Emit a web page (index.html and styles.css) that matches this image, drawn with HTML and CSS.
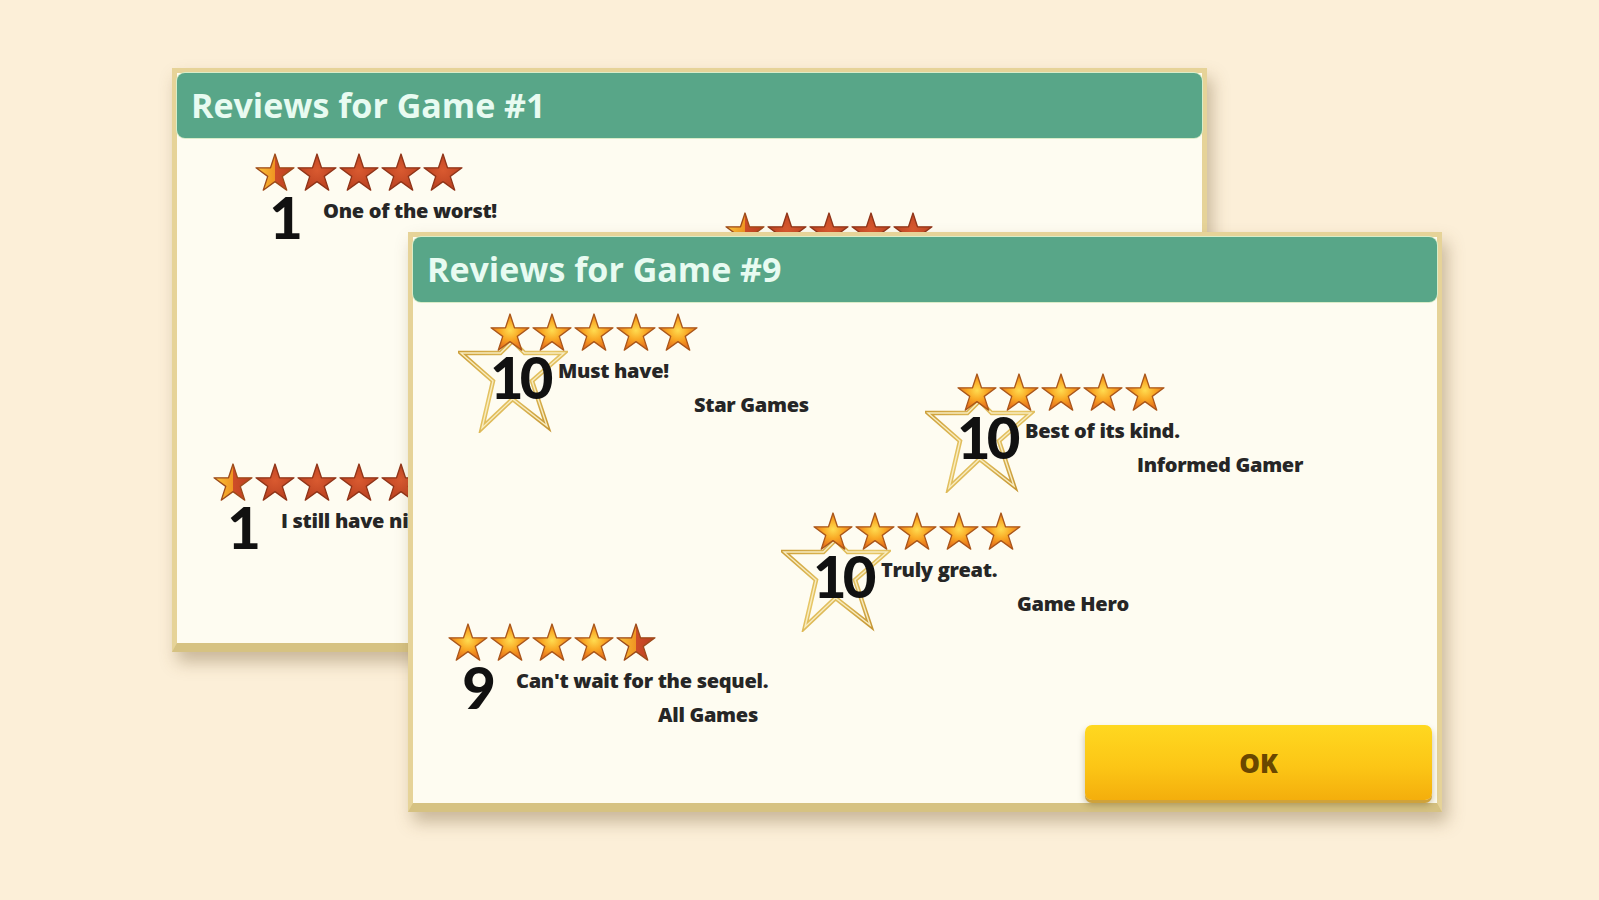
FILE: index.html
```html
<!DOCTYPE html>
<html lang="en">
<head>
    <meta charset="UTF-8">
    <title>Reviews</title>

    <link rel="stylesheet" href="styles.css">
</head>
<body>

    <!-- shared star shapes and fills -->
    <svg class="defs" width="0" height="0" aria-hidden="true">
        <defs>
            <radialGradient id="g-full" cx="50%" cy="45%" r="58%">
                <stop offset="0" stop-color="#ffdc50"/>
                <stop offset="0.45" stop-color="#f9a824"/>
                <stop offset="1" stop-color="#e2621a"/>
            </radialGradient>
            <radialGradient id="g-empty" cx="50%" cy="45%" r="60%">
                <stop offset="0" stop-color="#d95a30"/>
                <stop offset="1" stop-color="#b83f1f"/>
            </radialGradient>
            <linearGradient id="g-half" x1="0" y1="0" x2="1" y2="0">
                <stop offset="0" stop-color="#fcc43a"/>
                <stop offset="0.5" stop-color="#ef9522"/>
                <stop offset="0.5" stop-color="#cf4d28"/>
                <stop offset="1" stop-color="#b83f1f"/>
            </linearGradient>
            <linearGradient id="g-rim" x1="0" y1="0" x2="1" y2="1">
                <stop offset="0" stop-color="#c99a34"/>
                <stop offset="0.5" stop-color="#e7c766"/>
                <stop offset="1" stop-color="#c18f2c"/>
            </linearGradient>
        </defs>
        <symbol id="star-full" viewBox="0 0 40 38">
            <polygon points="20,1 24.49,14.82 39.02,14.82 27.27,23.36 31.76,37.18 20,28.64 8.24,37.18 12.73,23.36 0.98,14.82 15.51,14.82"
                     fill="url(#g-full)" stroke="#a9561a" stroke-width="1.3" stroke-linejoin="round"/>
        </symbol>
        <symbol id="star-empty" viewBox="0 0 40 38">
            <polygon points="20,1 24.49,14.82 39.02,14.82 27.27,23.36 31.76,37.18 20,28.64 8.24,37.18 12.73,23.36 0.98,14.82 15.51,14.82"
                     fill="url(#g-empty)" stroke="#8f3418" stroke-width="1.3" stroke-linejoin="round"/>
        </symbol>
        <symbol id="star-half" viewBox="0 0 40 38">
            <polygon points="20,1 24.49,14.82 39.02,14.82 27.27,23.36 31.76,37.18 20,28.64 8.24,37.18 12.73,23.36 0.98,14.82 15.51,14.82"
                     fill="url(#g-half)" stroke="#9c4a1a" stroke-width="1.3" stroke-linejoin="round"/>
        </symbol>
        <symbol id="badge" viewBox="-32 0 110 120">
            <polygon points="22.5,28 34.6,40 74,40 42,68 57,113 22.5,86 -8,115 3,68 -29,40 10.4,40"
                     fill="none" stroke="url(#g-rim)" stroke-width="4.5" stroke-linejoin="miter"/>
            <polygon points="22.5,28 34.6,40 74,40 42,68 57,113 22.5,86 -8,115 3,68 -29,40 10.4,40"
                     fill="none" stroke="#f8ecc0" stroke-width="1.4" stroke-linejoin="miter"/>
        </symbol>
    </svg>

    <div class="desk">

        <section class="dialog back">
            <header class="dialog-head">Reviews for Game #1</header>
            <div class="canvas">

                <div class="review pos-a">
                    <div class="stars">
                        <svg class="star"><use href="#star-half"/></svg>
                        <svg class="star"><use href="#star-empty"/></svg>
                        <svg class="star"><use href="#star-empty"/></svg>
                        <svg class="star"><use href="#star-empty"/></svg>
                        <svg class="star"><use href="#star-empty"/></svg>
                    </div>
                    <div class="body">
                        <div class="score"><span>1</span></div>
                        <div class="text">
                            <p class="quote">One of the worst!</p>
                        </div>
                    </div>
                </div>

                <!-- only the top of this one shows above the front window -->
                <div class="review pos-b">
                    <div class="stars">
                        <svg class="star"><use href="#star-half"/></svg>
                        <svg class="star"><use href="#star-empty"/></svg>
                        <svg class="star"><use href="#star-empty"/></svg>
                        <svg class="star"><use href="#star-empty"/></svg>
                        <svg class="star"><use href="#star-empty"/></svg>
                    </div>
                </div>

                <div class="review pos-c">
                    <div class="stars">
                        <svg class="star"><use href="#star-half"/></svg>
                        <svg class="star"><use href="#star-empty"/></svg>
                        <svg class="star"><use href="#star-empty"/></svg>
                        <svg class="star"><use href="#star-empty"/></svg>
                        <svg class="star"><use href="#star-empty"/></svg>
                    </div>
                    <div class="body">
                        <div class="score"><span>1</span></div>
                        <div class="text">
                            <p class="quote">I still have nightmares.</p>
                        </div>
                    </div>
                </div>

            </div>
        </section>

        <section class="dialog front">
            <header class="dialog-head">Reviews for Game #9</header>
            <div class="canvas">

                <div class="review pos-1">
                    <div class="stars">
                        <svg class="star"><use href="#star-full"/></svg>
                        <svg class="star"><use href="#star-full"/></svg>
                        <svg class="star"><use href="#star-full"/></svg>
                        <svg class="star"><use href="#star-full"/></svg>
                        <svg class="star"><use href="#star-full"/></svg>
                    </div>
                    <div class="body">
                        <div class="score">
                            <svg class="badge"><use href="#badge"/></svg>
                            <span>10</span>
                        </div>
                        <div class="text">
                            <p class="quote">Must have!</p>
                            <p class="author">Star Games</p>
                        </div>
                    </div>
                </div>

                <div class="review pos-2">
                    <div class="stars">
                        <svg class="star"><use href="#star-full"/></svg>
                        <svg class="star"><use href="#star-full"/></svg>
                        <svg class="star"><use href="#star-full"/></svg>
                        <svg class="star"><use href="#star-full"/></svg>
                        <svg class="star"><use href="#star-full"/></svg>
                    </div>
                    <div class="body">
                        <div class="score">
                            <svg class="badge"><use href="#badge"/></svg>
                            <span>10</span>
                        </div>
                        <div class="text">
                            <p class="quote">Best of its kind.</p>
                            <p class="author">Informed Gamer</p>
                        </div>
                    </div>
                </div>

                <div class="review pos-3">
                    <div class="stars">
                        <svg class="star"><use href="#star-full"/></svg>
                        <svg class="star"><use href="#star-full"/></svg>
                        <svg class="star"><use href="#star-full"/></svg>
                        <svg class="star"><use href="#star-full"/></svg>
                        <svg class="star"><use href="#star-full"/></svg>
                    </div>
                    <div class="body">
                        <div class="score">
                            <svg class="badge"><use href="#badge"/></svg>
                            <span>10</span>
                        </div>
                        <div class="text">
                            <p class="quote">Truly great.</p>
                            <p class="author">Game Hero</p>
                        </div>
                    </div>
                </div>

                <div class="review pos-4">
                    <div class="stars">
                        <svg class="star"><use href="#star-full"/></svg>
                        <svg class="star"><use href="#star-full"/></svg>
                        <svg class="star"><use href="#star-full"/></svg>
                        <svg class="star"><use href="#star-full"/></svg>
                        <svg class="star"><use href="#star-half"/></svg>
                    </div>
                    <div class="body">
                        <div class="score"><span>9</span></div>
                        <div class="text">
                            <p class="quote">Can't wait for the sequel.</p>
                            <p class="author">All Games</p>
                        </div>
                    </div>
                </div>

            </div>
            <div class="footer">
                <button class="ok">OK</button>
            </div>
        </section>

    </div>

</body>
</html>
```

FILE: styles.css
```css
* {
    margin: 0;
    padding: 0;
    box-sizing: border-box;
}

body {
    width: 1599px;
    height: 900px;
    overflow: hidden;
    background: #fcefd8;
    font-family: "Open Sans", "Liberation Sans", sans-serif;
}

.defs {
    position: absolute;
    width: 0;
    height: 0;
    overflow: hidden;
}

.desk {
    position: relative;
    width: 1599px;
    height: 900px;
}

/* windows */
.dialog {
    position: absolute;
    width: 1035px;
    height: 584px;
    display: flex;
    flex-direction: column;
    background: #fefcf1;
    border: 5px solid #e6d398;
    border-bottom-width: 9px;
    border-bottom-color: #d6c282;
    box-shadow: 5px 10px 16px rgba(105, 80, 40, 0.35);
}

.back {
    left: 172px;
    top: 68px;
    z-index: 1;
}

.front {
    left: 408px;
    top: 232px;
    width: 1034px;
    height: 580px;
    z-index: 2;
}

.dialog-head {
    flex: none;
    height: 65px;
    line-height: 65px;
    padding-left: 14px;
    background: #58a688;
    border-radius: 8px;
    box-shadow: 0 0 0 1px #d9ecc8;
    color: #e8fbf1;
    font-size: 34px;
    font-weight: 700;
}

.canvas {
    flex: 1;
    position: relative;
}

.footer {
    display: flex;
    justify-content: flex-end;
    padding: 0 5px 3px;
}

.ok {
    width: 347px;
    height: 75px;
    border: none;
    border-radius: 7px;
    background: linear-gradient(#ffd820, #fcc616 55%, #f4ae0c);
    box-shadow: 0 3px 0 #cfa23a, 0 5px 7px rgba(90, 70, 20, 0.35);
    font-family: inherit;
    font-size: 26px;
    font-weight: 800;
    color: #6a4700;
}

/* reviews */
.review {
    position: absolute;
}

.pos-a { left: 78px; top: 15px; }
.pos-b { left: 548px; top: 74px; }
.pos-c { left: 36px; top: 325px; }

.pos-1 { left: 77px; top: 11px; }
.pos-2 { left: 544px; top: 71px; }
.pos-3 { left: 400px; top: 210px; }
.pos-4 { left: 35px; top: 321px; }

.stars {
    position: relative;
    z-index: 2;
    display: flex;
    gap: 2px;
}

.star {
    display: block;
    width: 40px;
    height: 38px;
}

.body {
    display: flex;
    align-items: flex-start;
    margin-top: -3px;
}

.score {
    position: relative;
    flex: none;
    width: 58px;
    text-align: center;
    font-family: Lato, "DejaVu Sans", sans-serif;
    font-weight: 900;
    font-size: 58px;
    line-height: 58px;
    letter-spacing: -4px;
    color: #111;
}

.score span {
    position: relative;
    z-index: 1;
}

.badge {
    position: absolute;
    left: -32px;
    top: -35px;
    width: 110px;
    height: 120px;
    z-index: 0;
}

.text {
    margin-left: 10px;
    margin-top: 11px;
    font-size: 20px;
    font-weight: 800;
    line-height: 24px;
    letter-spacing: -0.3px;
    color: #262626;
    white-space: nowrap;
}

.author {
    margin-top: 10px;
    margin-left: 136px;
}

.pos-2 .author {
    margin-left: 112px;
}

.pos-3 .text {
    margin-left: 10px;
}

.pos-3 .author {
    margin-left: 136px;
}

.pos-4 .author {
    margin-left: 142px;
}
```
